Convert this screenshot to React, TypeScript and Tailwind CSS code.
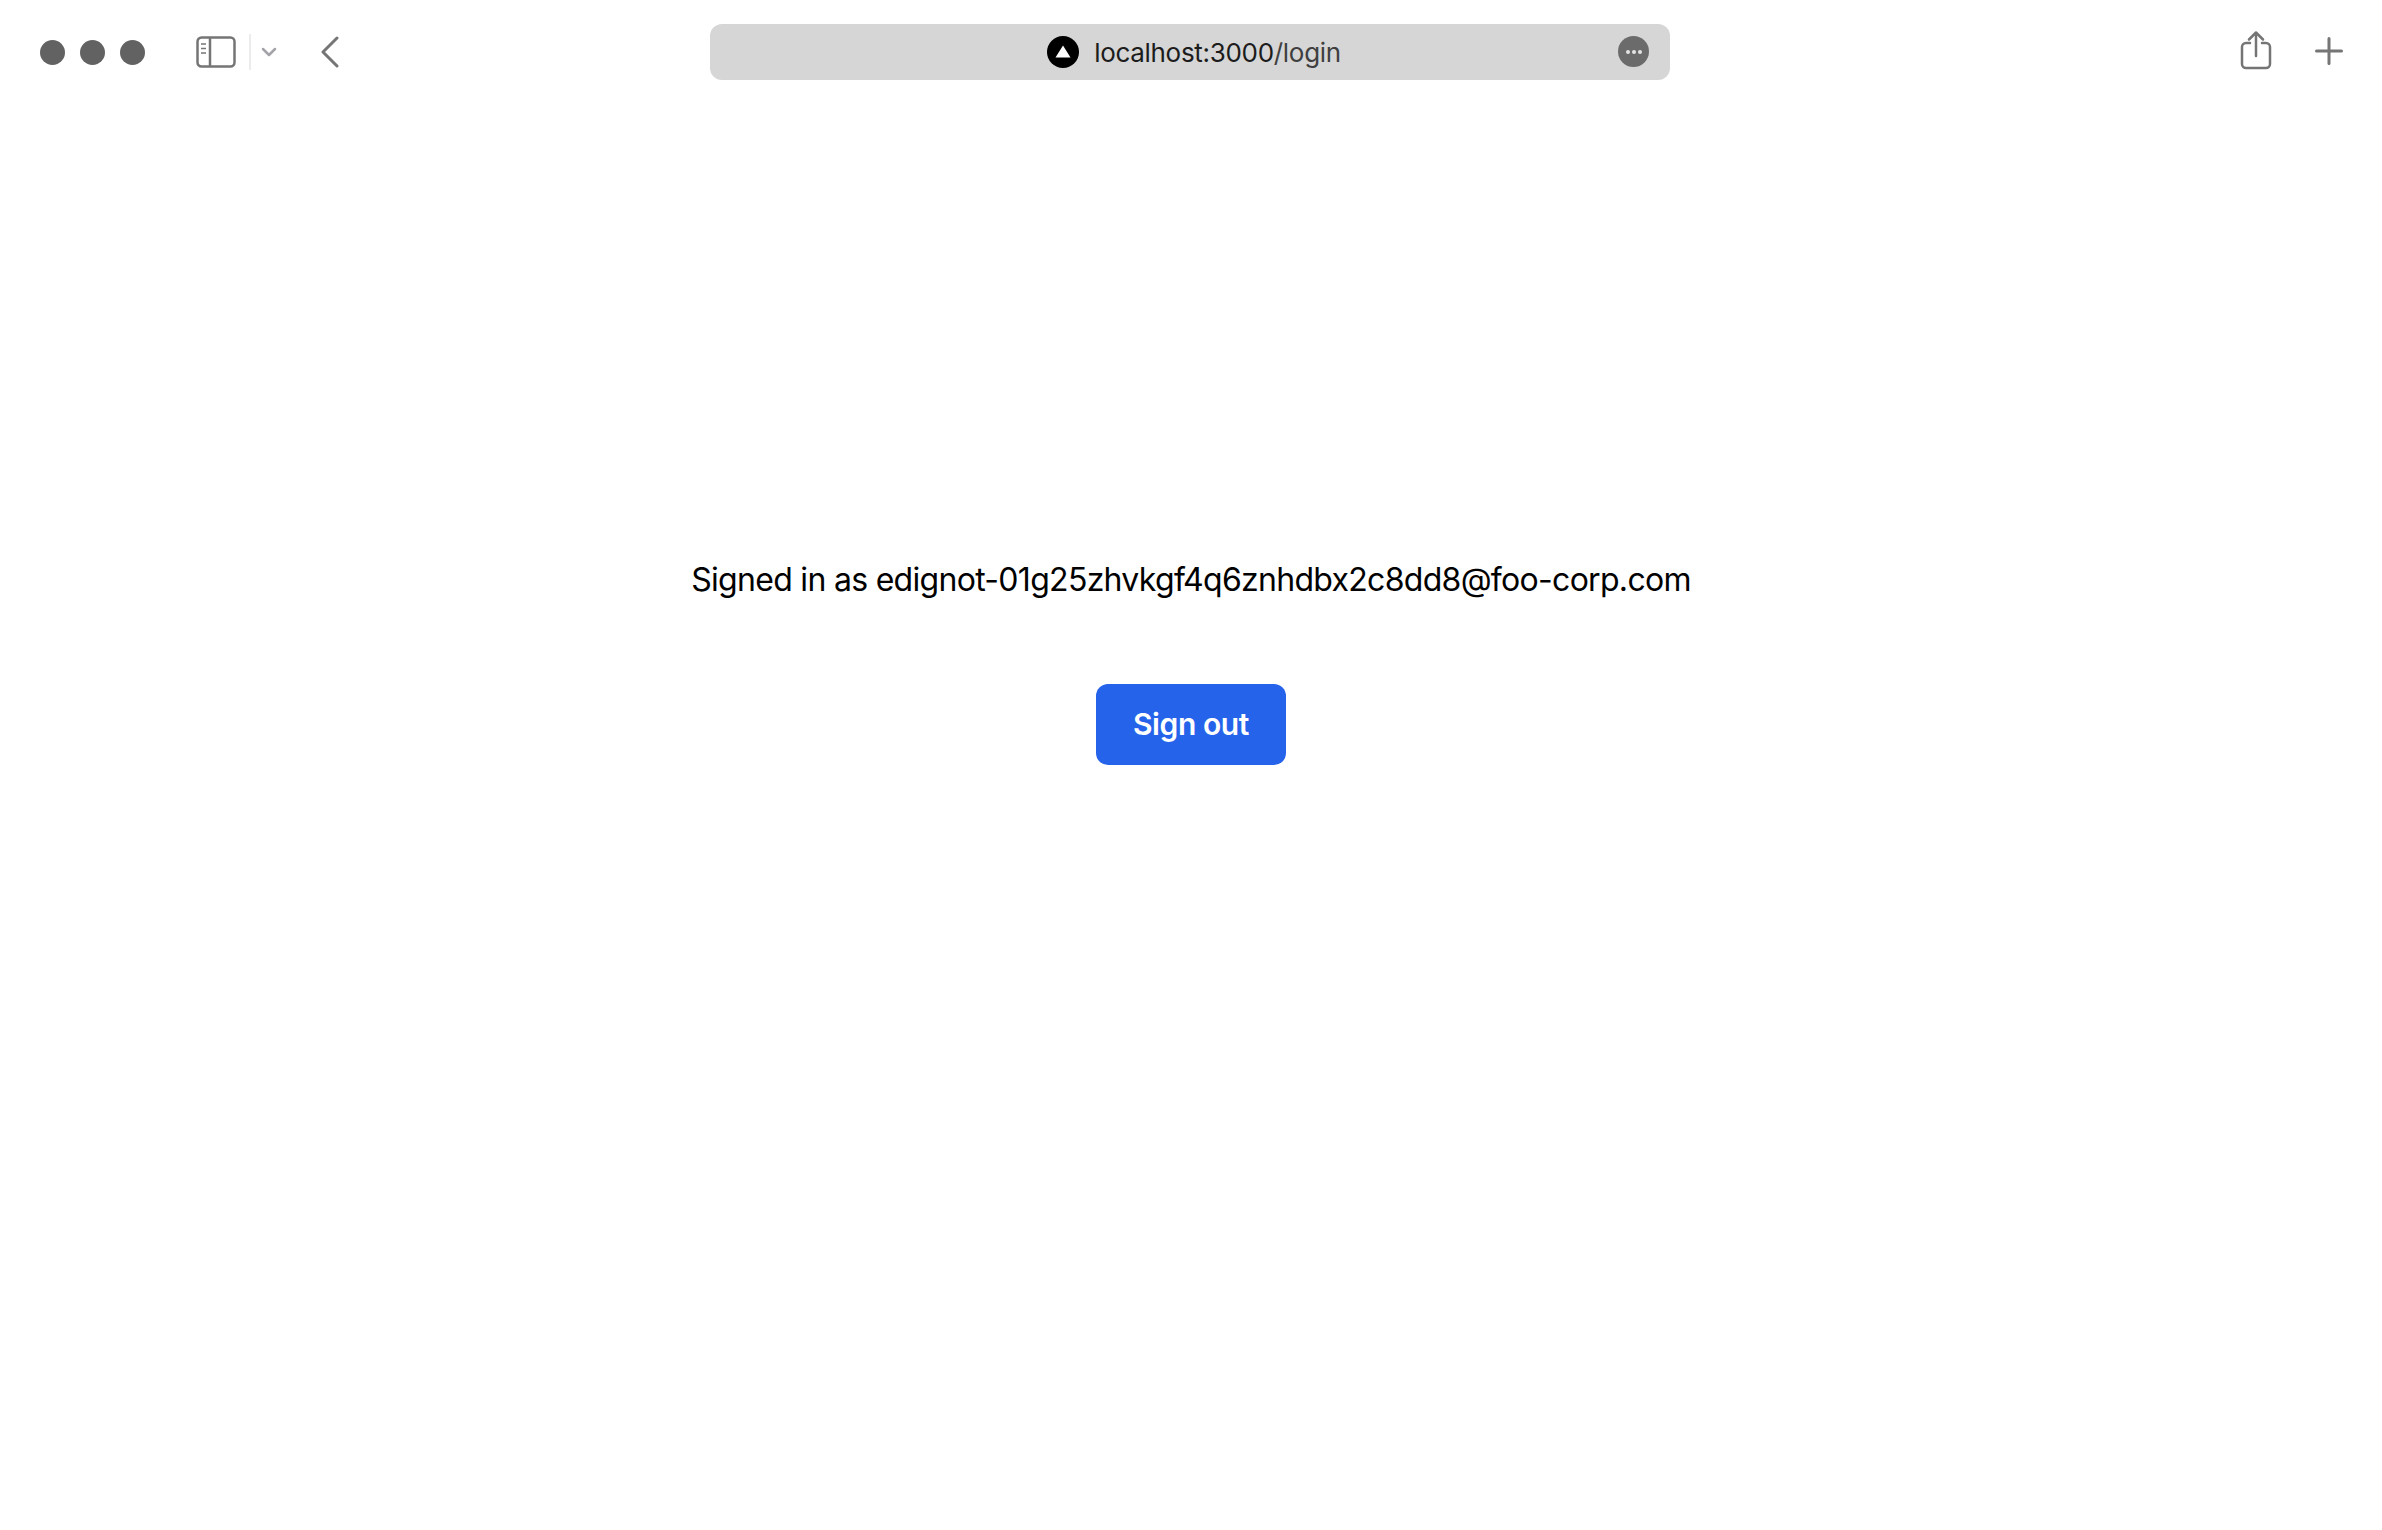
export default function App() {
  return (
    <div className="min-h-screen w-full bg-white font-['Inter',sans-serif]">
      {/* Browser toolbar */}
      <header className="flex h-[104px] items-center">
        <div className="flex w-[710px] shrink-0 items-center pl-[40px]">
          <div className="flex gap-[15px]">
            <span className="h-[25px] w-[25px] rounded-full bg-[#626262]" />
            <span className="h-[25px] w-[25px] rounded-full bg-[#626262]" />
            <span className="h-[25px] w-[25px] rounded-full bg-[#626262]" />
          </div>
          <svg className="ml-[51px]" width="40" height="32" viewBox="0 0 40 32" fill="none">
            <rect x="1.5" y="1.5" width="37" height="29" rx="4" stroke="#757575" strokeWidth="2.5" />
            <path d="M14 2v28" stroke="#757575" strokeWidth="2.5" />
            <path d="M5 8h5M5 12.5h5M5 17h5" stroke="#757575" strokeWidth="1.5" />
          </svg>
          <span className="ml-[13px] h-[36px] w-[2px] bg-[#ececec]" />
          <svg className="ml-[10px]" width="16" height="12" viewBox="0 0 16 12" fill="none">
            <path d="M2 3l6 6 6-6" stroke="#a3a3a8" strokeWidth="2.5" strokeLinecap="round" strokeLinejoin="round" />
          </svg>
          <svg className="ml-[43px]" width="20" height="32" viewBox="0 0 20 32" fill="none">
            <path d="M17 2L3 16l14 14" stroke="#757575" strokeWidth="3" strokeLinecap="round" strokeLinejoin="round" />
          </svg>
        </div>

        <div className="relative flex h-[56px] w-[960px] shrink-0 items-center justify-center rounded-[12px] bg-[#d6d6d6] pl-[8px]">
          <div className="flex items-center gap-[15px]">
            <svg width="32" height="32" viewBox="0 0 32 32">
              <circle cx="16" cy="16" r="16" fill="#000" />
              <path d="M16 9.5l7.5 12h-15z" fill="#fff" />
            </svg>
            <span className="mt-[2px] text-[26px] leading-[36px] tracking-[-0.3px] text-[#1c1c1c]">
              localhost:3000<span className="text-[#3f3f3f]">/login</span>
            </span>
          </div>
          <div className="absolute right-[21px] top-[12px] flex h-[31px] w-[31px] items-center justify-center gap-[2px] rounded-full bg-[#6b6b6b]">
            <span className="h-[4px] w-[4px] rounded-full bg-[#e4e4e4]" />
            <span className="h-[4px] w-[4px] rounded-full bg-[#e4e4e4]" />
            <span className="h-[4px] w-[4px] rounded-full bg-[#e4e4e4]" />
          </div>
        </div>

        <div className="flex flex-1 items-center justify-end pr-[39px]">
          <svg className="-mt-[4px]" width="32" height="40" viewBox="0 0 32 40" fill="none">
            <path d="M10 13H6a4 4 0 0 0-4 4v17a4 4 0 0 0 4 4h20a4 4 0 0 0 4-4V17a4 4 0 0 0-4-4h-4" stroke="#757575" strokeWidth="2.5" strokeLinecap="round" />
            <path d="M16 26V3M9 9.5L16 2.5l7 7" stroke="#757575" strokeWidth="2.5" strokeLinecap="round" strokeLinejoin="round" />
          </svg>
          <svg className="ml-[43px] -mt-[2px]" width="28" height="28" viewBox="0 0 28 28" fill="none">
            <path d="M14 1.5v25M1.5 14h25" stroke="#757575" strokeWidth="3" strokeLinecap="round" />
          </svg>
        </div>
      </header>

      {/* Page content */}
      <main className="flex flex-col items-center pt-[454px]">
        <p className="text-[32px] leading-[44px] tracking-[-0.7px] text-black">
          Signed in as edignot-01g25zhvkgf4q6znhdbx2c8dd8@foo-corp.com
        </p>
        <button className="mt-[82px] flex h-[81px] w-[190px] items-center justify-center rounded-[12px] bg-[#2563eb] text-[30px] font-semibold tracking-[-0.4px] text-white">
          Sign out
        </button>
      </main>
    </div>
  );
}
